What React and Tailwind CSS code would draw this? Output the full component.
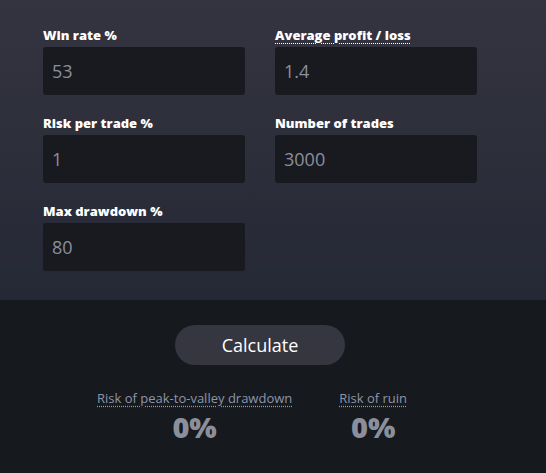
export default function App() {
  const Field = ({ label, value, dotted }) => (
    <div className="flex flex-col w-[202px]">
      <label
        className={
          "text-[13px] font-extrabold text-white leading-[17px] mb-[3px] self-start " +
          (dotted ? "underline decoration-dotted decoration-[1px] underline-offset-[3px] decoration-white" : "")
        }
      >
        {label}
      </label>
      <div className="h-[48px] rounded-[3px] bg-[#181a1f] flex items-center pl-[9px] text-[18px] text-[#8a909d]">
        {value}
      </div>
    </div>
  );

  return (
    <div className="w-[546px] h-[473px] overflow-hidden bg-[#16191e]" style={{ fontFamily: '"Open Sans", sans-serif' }}>
      <div className="h-[300px] bg-gradient-to-b from-[#343440] to-[#252935] pt-[27px] pl-[43px]">
        <div className="grid grid-cols-[202px_202px] gap-x-[30px] gap-y-[20px]">
          <Field label="Win rate %" value="53" />
          <Field label="Average profit / loss" value="1.4" dotted />
          <Field label="Risk per trade %" value="1" />
          <Field label="Number of trades" value="3000" />
          <Field label="Max drawdown %" value="80" />
        </div>
      </div>
      <div className="flex flex-col">
        <button className="ml-[175px] mt-[25px] w-[170px] h-[40px] rounded-full bg-[#363641] text-white text-[18px] leading-none">
          Calculate
        </button>
        <div className="flex ml-[97px] mt-[24px] gap-[47px]">
          <div className="flex flex-col items-center">
            <span className="text-[13px] leading-[18px] text-[#8d96aa] underline decoration-dotted underline-offset-[3px]">
              Risk of peak-to-valley drawdown
            </span>
            <span className="text-[29px] font-extrabold leading-[36px] mt-[2px] text-[#8b8f9b]">0%</span>
          </div>
          <div className="flex flex-col items-center">
            <span className="text-[13px] leading-[18px] text-[#8d96aa] underline decoration-dotted underline-offset-[3px]">
              Risk of ruin
            </span>
            <span className="text-[29px] font-extrabold leading-[36px] mt-[2px] text-[#8b8f9b]">0%</span>
          </div>
        </div>
      </div>
    </div>
  );
}
